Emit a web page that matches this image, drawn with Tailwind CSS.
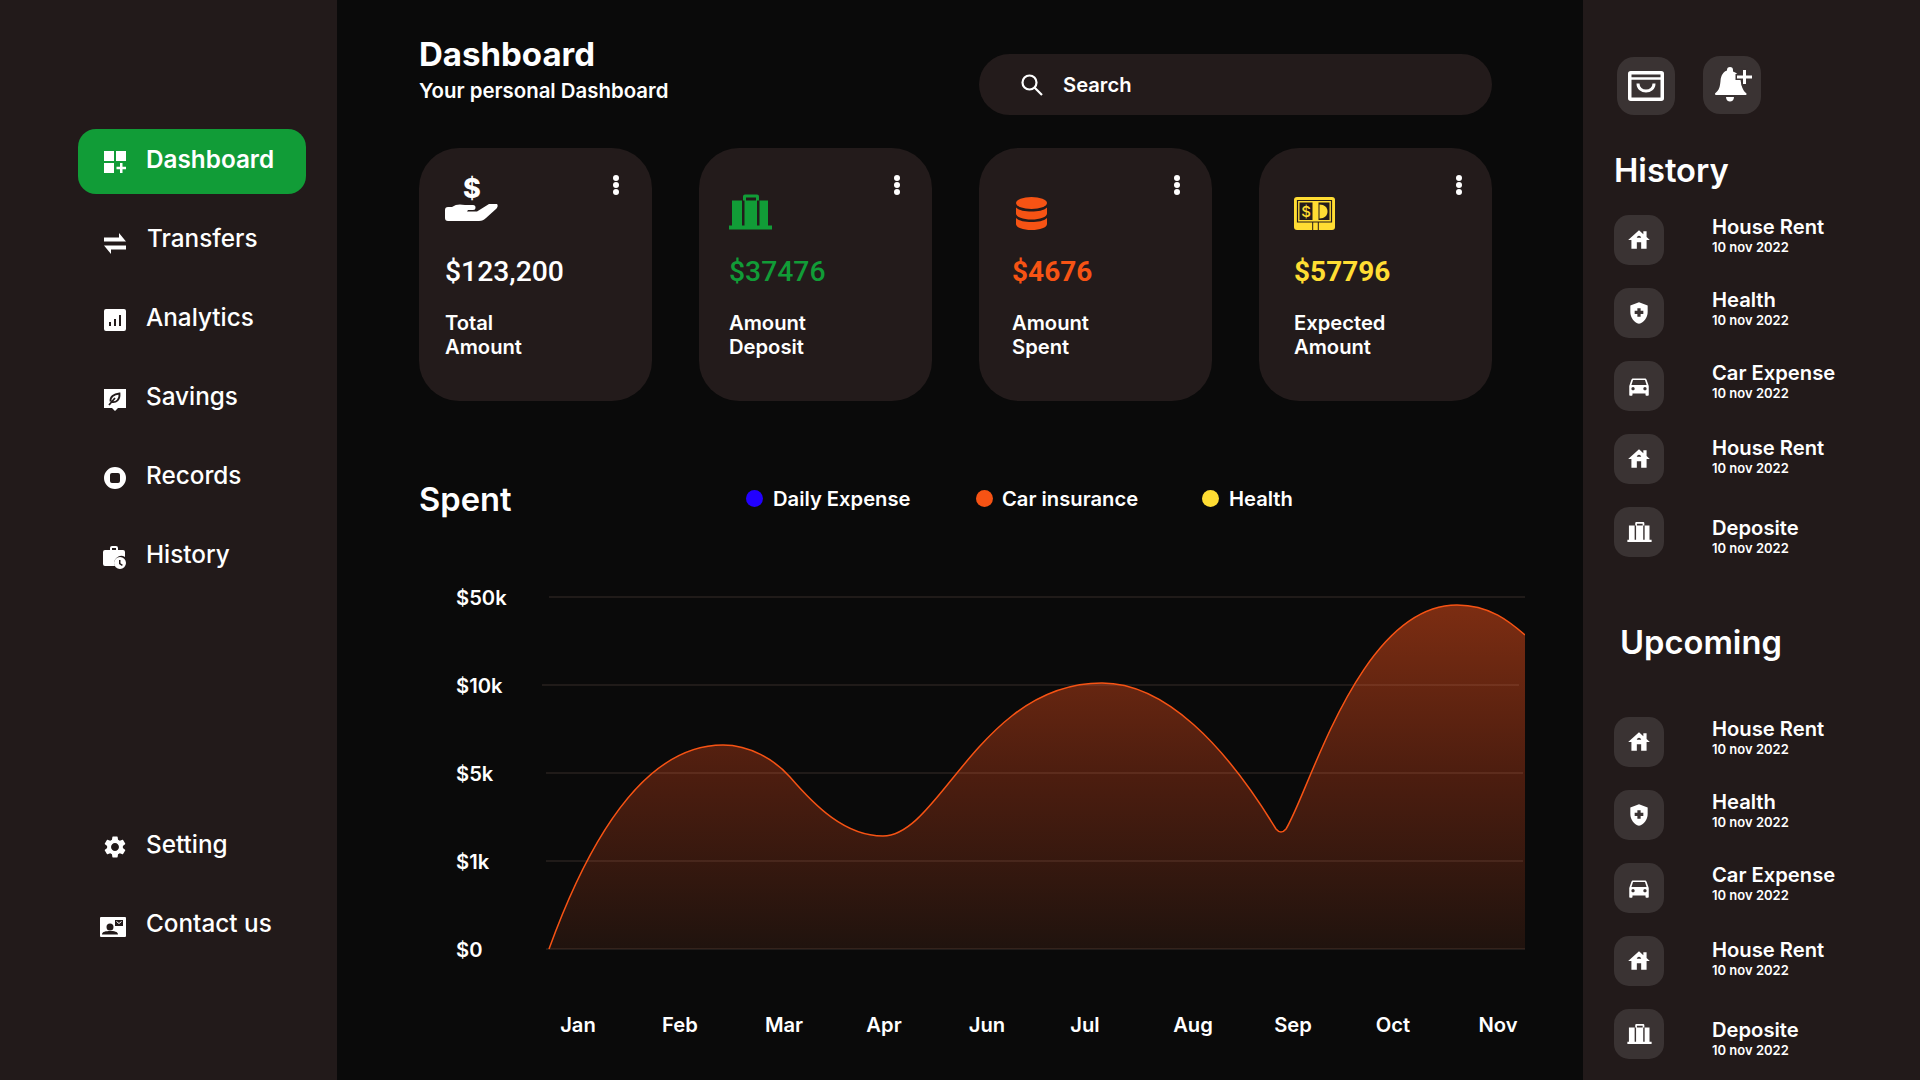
<!DOCTYPE html>
<html lang="en">
  <head>
    <meta charset="UTF-8" />
    <meta name="viewport" content="width=device-width, initial-scale=1.0" />
    <title>Dashboard</title>
    <script src="https://cdn.jsdelivr.net/npm/@tailwindcss/browser@4"></script>
  </head>
  <body class="bg-[#0a0a0a] text-white font-['Inter',sans-serif] h-[1080px] overflow-hidden">
    <!-- shared list icons -->
    <svg class="hidden">
      <symbol id="i-house" viewBox="0 0 24 24"><path fill="#fff" d="M19 9.300V4h-3v2.600L12 3 2 12h3v8h5v-6h4v6h5v-8h3l-3-2.700zm-9 .7c0-1.100.9-2 2-2s2 .9 2 2h-4z"/></symbol>
      <symbol id="i-shield" viewBox="0 0 24 24"><path fill="#fff" d="M10.500 13H8v-3h2.500V7.500h3V10H16v3h-2.500v2.500h-3V13zM12 2L4 5v6.090c0 5.050 3.410 9.760 8 10.910 4.590-1.150 8-5.860 8-10.910V5l-8-3z"/></symbol>
      <symbol id="i-car" viewBox="0 0 24 24"><path fill="#fff" d="M18.920 6.010C18.720 5.420 18.160 5 17.500 5h-11c-.66 0-1.210.42-1.420 1.010L3 12v8c0 .55.45 1 1 1h1c.55 0 1-.45 1-1v-1h12v1c0 .55.45 1 1 1h1c.55 0 1-.45 1-1v-8l-2.080-5.990zM6.500 16c-.83 0-1.500-.67-1.500-1.500S5.670 13 6.500 13s1.500.67 1.500 1.500S7.330 16 6.500 16zm11 0c-.83 0-1.500-.67-1.500-1.500s.67-1.500 1.500-1.500 1.500.67 1.500 1.500-.67 1.500-1.500 1.500zM5 11l1.500-4.500h11L19 11H5z"/></symbol>
      <symbol id="i-bank" viewBox="0 0 43 35"><path fill="#fff" fill-rule="evenodd" d="M14 6V2a2 2 0 0 1 2-2h12a2 2 0 0 1 2 2v4h9v25h4v4H0v-4h3V6zM17 3v3h10V3zM13 6v25h2.500V6zM28 6v25h2.500V6z"/></symbol>
    </svg>

    <div class="flex h-[1080px]">
      <!-- sidebar -->
      <aside class="w-[337px] shrink-0 bg-[#221a1a] pt-[129px] pl-[78px] flex flex-col">
        <nav class="flex flex-col gap-[14px] text-[24.300px] font-medium">
          <a class="w-[228px] h-[65px] bg-[#119c37] rounded-[18px] pl-[26px] flex items-center gap-[20px] font-semibold">
            <svg class="w-[22px] h-[22px]" viewBox="0 0 22 22" fill="#fff"><path d="M0 0h10v10H0zM12 0h10v10H12zM0 12h10v10H0zM16 12h2.500v3.800H22v2.400h-3.500V22H16v-3.800h-3.500v-2.400H16z"/></svg>
            <span class="-mt-[4px]">Dashboard</span>
          </a>
          <a class="w-[228px] h-[65px] pl-[26px] flex items-center gap-[21px]">
            <svg class="w-[22px] h-[22px] mt-[6px]" viewBox="0 0 22 22" fill="#fff"><path d="M0 4.500h15V0l7 8.500H0zM22 16.500H7V21L0 12.500h22z"/></svg>
            <span class="-mt-[4px]">Transfers</span>
          </a>
          <a class="w-[228px] h-[65px] pl-[26px] flex items-center gap-[20px]">
            <svg class="w-[22px] h-[22px]" viewBox="0 0 22 22"><path fill="#fff" fill-rule="evenodd" d="M2 0h18a2 2 0 0 1 2 2v18a2 2 0 0 1-2 2H2a2 2 0 0 1-2-2V2a2 2 0 0 1 2-2zM5 13v4h2v-4zM10 10v7h2v-7zM15 6v11h2V6z"/></svg>
            <span class="-mt-[4px]">Analytics</span>
          </a>
          <a class="w-[228px] h-[65px] pl-[26px] flex items-center gap-[20px]">
            <svg class="w-[22px] h-[22px] mt-[2px]" viewBox="0 0 22 22"><path fill="#fff" d="M0 0h22v19h-8l-3 3-3-3H0z"/><path fill="none" stroke="#221a1a" stroke-width="1.800" d="M6.500 12.500c-.5-4.500 3-7.500 9-8 .5 6-3 9.500-8 8.500M5 16l6-7"/></svg>
            <span class="-mt-[4px]">Savings</span>
          </a>
          <a class="w-[228px] h-[65px] pl-[26px] flex items-center gap-[20px]">
            <svg class="w-[22px] h-[22px]" viewBox="0 0 22 22"><path fill="#fff" fill-rule="evenodd" d="M11 0a11 11 0 1 1 0 22a11 11 0 0 1 0-22zM8 6a2 2 0 0 0-2 2v6a2 2 0 0 0 2 2h6a2 2 0 0 0 2-2V8a2 2 0 0 0-2-2z"/></svg>
            <span class="-mt-[4px]">Records</span>
          </a>
          <a class="w-[228px] h-[65px] pl-[25px] flex items-center gap-[20px]">
            <svg class="w-[23px] h-[23px] mt-[1px]" viewBox="0 0 23 23"><path fill="#fff" fill-rule="evenodd" d="M7 4V2a2 2 0 0 1 2-2h4a2 2 0 0 1 2 2v2h5a2 2 0 0 1 2 2v5a7 7 0 0 0-10 9H2a2 2 0 0 1-2-2V6a2 2 0 0 1 2-2zM9 2v2h4V2z"/><path fill="#fff" fill-rule="evenodd" d="M17 11a6 6 0 1 1 0 12a6 6 0 0 1 0-12zM16 14v4l3 2 .8-1.200-2.300-1.500V14z"/></svg>
            <span class="-mt-[4px]">History</span>
          </a>
        </nav>
        <nav class="mt-[225px] flex flex-col gap-[14px] text-[24.300px] font-medium">
          <a class="w-[228px] h-[65px] pl-[26px] flex items-center gap-[20px]">
            <svg class="w-[22px] h-[22px]" viewBox="2.400 2 19.200 20"><path fill="#fff" d="M19.140 12.940c.04-.3.06-.61.06-.94 0-.32-.02-.64-.07-.94l2.030-1.580c.18-.14.23-.41.12-.61l-1.920-3.320c-.12-.22-.37-.29-.59-.22l-2.390.96c-.5-.38-1.030-.7-1.620-.94l-.36-2.540c-.04-.24-.24-.41-.48-.41h-3.840c-.24 0-.43.17-.47.41l-.36 2.540c-.59.24-1.130.57-1.620.94l-2.390-.96c-.22-.08-.47 0-.59.22L2.740 8.870c-.12.21-.08.47.12.61l2.030 1.580c-.05.3-.09.63-.09.94s.02.64.07.94l-2.030 1.580c-.18.14-.23.41-.12.61l1.920 3.320c.12.22.37.29.59.22l2.390-.96c.5.38 1.030.7 1.620.94l.36 2.540c.05.24.24.41.48.41h3.840c.24 0 .44-.17.47-.41l.36-2.540c.59-.24 1.130-.56 1.620-.94l2.390.96c.22.08.47 0 .59-.22l1.920-3.320c.12-.22.07-.47-.12-.61l-2.010-1.580zM12 15.600c-1.980 0-3.600-1.620-3.600-3.600s1.620-3.600 3.600-3.600 3.600 1.620 3.600 3.600-1.620 3.600-3.600 3.600z"/></svg>
            <span class="-mt-[4px]">Setting</span>
          </a>
          <a class="w-[228px] h-[65px] pl-[22px] flex items-center gap-[20px]">
            <svg class="w-[26px] h-[20px] mt-[3px]" viewBox="0 0 26 20"><path fill="#fff" fill-rule="evenodd" d="M1 0h24a1 1 0 0 1 1 1v18a1 1 0 0 1-1 1H1a1 1 0 0 1-1-1V1a1 1 0 0 1 1-1zM15 3v6h8V3zM10 6.500a3.500 3.500 0 1 0 0 7a3.500 3.500 0 0 0 0-7zM2 17.500h16c0-3-4-3.500-8-3.500s-8 .5-8 3.500z"/><path fill="none" stroke="#fff" stroke-width="1" d="M16.500 4.500l2.500 2 2.500-2"/></svg>
            <span class="-mt-[4px]">Contact us</span>
          </a>
        </nav>
      </aside>

      <!-- main -->
      <main class="flex-1 pl-[82px]">
        <header class="w-[1073px] h-[148px] flex justify-between">
          <div class="pt-[35px]">
            <h1 class="text-[33px] leading-[38px] font-bold">Dashboard</h1>
            <p class="text-[20.400px] leading-[24px] font-semibold mt-[6px]">Your personal Dashboard</p>
          </div>
          <div class="w-[513px] h-[61px] mt-[54px] bg-[#231b1b] rounded-full pl-[42px] flex items-center gap-[20px]">
            <svg class="w-[22px] h-[22px]" viewBox="0 0 22 22" fill="none" stroke="#fff" stroke-width="2.200"><circle cx="8.500" cy="8.500" r="7"/><path d="M13.500 13.500L21 21"/></svg>
            <span class="text-[20.200px] font-semibold mt-[2px]">Search</span>
          </div>
        </header>

        <section class="flex gap-[47px]">
          <div class="relative w-[233px] h-[253px] bg-[#231b1b] rounded-[40px] pl-[26px]">
            <div class="h-[82px] pt-[26px] w-[54px] flex flex-col items-center">
              <span class="text-[27px] leading-[30px] font-extrabold">$</span>
              <svg class="w-[54px] h-[17px] shrink-0" viewBox="0 31 54 17"><path fill="#fff" d="M0 37a3 3 0 0 1 3-3h4c4-3 8-3 13-2h8a2.500 2.500 0 0 1 0 5h-5l-1 1.500h10l12-7.500c3-2 7-1 8 0s1 3-1 5L41 45c-2 2-4 3-7 3H3a3 3 0 0 1-3-3z"/></svg>
            </div>
            <div class="mt-[25px] h-[34px] leading-[34px] text-[28.300px] font-['Roboto',sans-serif] font-medium">$123,200</div>
            <div class="mt-[22px] text-[20.200px] leading-[24px] font-semibold">Total<br />Amount</div>
            <svg class="absolute right-[32px] top-[27px] w-[8px] h-[20px]" viewBox="0 0 8 20" fill="#fff"><circle cx="4" cy="3" r="3"/><circle cx="4" cy="10" r="3"/><circle cx="4" cy="17" r="3"/></svg>
          </div>
          <div class="relative w-[233px] h-[253px] bg-[#231b1b] rounded-[40px] pl-[30px]">
            <div class="h-[82px] pt-[46px]">
              <svg class="w-[43px] h-[36px]" viewBox="0 0 43 35"><path fill="#119c37" fill-rule="evenodd" d="M14 6V2a2 2 0 0 1 2-2h12a2 2 0 0 1 2 2v4h9v25h4v4H0v-4h3V6zM17 3v3h10V3zM13 6v25h2.500V6zM28 6v25h2.500V6z"/></svg>
            </div>
            <div class="mt-[25px] h-[34px] leading-[34px] text-[28.300px] font-['Roboto',sans-serif] font-medium text-[#119c37]">$37476</div>
            <div class="mt-[22px] text-[20.200px] leading-[24px] font-semibold">Amount<br />Deposit</div>
            <svg class="absolute right-[31px] top-[27px] w-[8px] h-[20px]" viewBox="0 0 8 20" fill="#fff"><circle cx="4" cy="3" r="3"/><circle cx="4" cy="10" r="3"/><circle cx="4" cy="17" r="3"/></svg>
          </div>
          <div class="relative w-[233px] h-[253px] bg-[#231b1b] rounded-[40px] pl-[33px]">
            <div class="h-[82px] pt-[49px] pl-[4px]">
              <svg class="w-[31px] h-[33px]" viewBox="0 0 31 33" fill="#f65314"><ellipse cx="15.500" cy="6" rx="15.500" ry="6"/><path d="M0 10.500c3 3 9 4 15.500 4s12.500-1 15.500-4v6c0 3.500-7 6-15.500 6S0 20 0 16.500zM0 21c3 3 9 4 15.500 4S28 24 31 21v6c0 3.500-7 6-15.500 6S0 30.500 0 27z"/></svg>
            </div>
            <div class="mt-[25px] h-[34px] leading-[34px] text-[28px] font-['Roboto',sans-serif] font-bold text-[#f65314]">$4676</div>
            <div class="mt-[22px] text-[20.200px] leading-[24px] font-semibold">Amount<br />Spent</div>
            <svg class="absolute right-[31px] top-[27px] w-[8px] h-[20px]" viewBox="0 0 8 20" fill="#fff"><circle cx="4" cy="3" r="3"/><circle cx="4" cy="10" r="3"/><circle cx="4" cy="17" r="3"/></svg>
          </div>
          <div class="relative w-[233px] h-[253px] bg-[#231b1b] rounded-[40px] pl-[35px]">
            <div class="h-[82px] pt-[49px]">
              <svg class="w-[41px] h-[33px]" viewBox="0 0 41 33"><rect width="41" height="33" rx="3" fill="#ffdd33"/><path d="M3.500 3.500h34v21.500h-34z" fill="none" stroke="#231b1b" stroke-width="1.200"/><path d="M5.500 5.500h13v17.500h-13zM24.500 5.500h11v17.500h-11z" fill="#231b1b"/><path d="M18.700 25v8M24.300 25v8" stroke="#231b1b" stroke-width="1"/><path d="M25.500 7.500c5 0 8 3 8 7s-3 7-8 7z" fill="#ffdd33"/><text x="12" y="19.500" text-anchor="middle" font-size="15" font-weight="500" fill="#ffdd33" font-family="Inter, sans-serif">$</text></svg>
            </div>
            <div class="mt-[25px] h-[34px] leading-[34px] text-[28px] font-['Roboto',sans-serif] font-bold text-[#ffdd33]">$57796</div>
            <div class="mt-[22px] text-[20.200px] leading-[24px] font-semibold">Expected<br />Amount</div>
            <svg class="absolute right-[29px] top-[27px] w-[8px] h-[20px]" viewBox="0 0 8 20" fill="#fff"><circle cx="4" cy="3" r="3"/><circle cx="4" cy="10" r="3"/><circle cx="4" cy="17" r="3"/></svg>
          </div>
        </section>

        <section class="mt-[78px] flex items-center h-[40px]">
          <h2 class="w-[327px] text-[32.700px] leading-[40px] font-semibold">Spent</h2>
          <div class="flex items-center text-[20.200px] font-semibold">
            <span class="w-[17px] h-[17px] rounded-full bg-[#2200ff] mr-[10px]"></span><span class="w-[203px]">Daily Expense</span>
            <span class="w-[17px] h-[17px] rounded-full bg-[#f65314] mr-[9px]"></span><span class="w-[200px]">Car insurance</span>
            <span class="w-[17px] h-[17px] rounded-full bg-[#ffdd33] mr-[10px]"></span><span>Health</span>
          </div>
        </section>

        <section class="mt-[71px] h-[362px] flex">
          <div class="w-[121px] shrink-0 pl-[37px] -mt-[36px] flex flex-col text-[20.200px] font-semibold">
            <span class="h-[88px] shrink-0 flex items-center">$50k</span>
            <span class="h-[88px] shrink-0 flex items-center">$10k</span>
            <span class="h-[88px] shrink-0 flex items-center">$5k</span>
            <span class="h-[88px] shrink-0 flex items-center">$1k</span>
            <span class="h-[88px] shrink-0 flex items-center">$0</span>
          </div>
          <svg class="w-[985px] h-[362px] shrink-0" viewBox="540 590 985 362">
            <defs>
              <linearGradient id="spentFill" gradientUnits="userSpaceOnUse" x1="0" y1="605" x2="0" y2="949">
                <stop offset="0" stop-color="#7c2d12"/>
                <stop offset="0.5" stop-color="#4c1d0f"/>
                <stop offset="1" stop-color="#20130e"/>
              </linearGradient>
            </defs>
            <path fill="url(#spentFill)" d="M549 949C585 850 640 745 723 745C750 745 775 760 790 777C815 806 845 836 883 836C940 836 980 683 1102 683C1165 683 1225 745 1276 829Q1281 835 1286 829C1310 790 1360 605 1457 605C1490 605 1510 622 1525 635V949Z"/>
            <g stroke="#ffc8b4" stroke-opacity="0.12" stroke-width="1.500">
              <path d="M549 597H1525"/>
              <path d="M542 685H1519"/>
              <path d="M546 773H1523"/>
              <path d="M546 861H1523"/>
              <path d="M546 949H1525"/>
            </g>
            <path fill="none" stroke="#f65314" stroke-width="1.500" d="M549 949C585 850 640 745 723 745C750 745 775 760 790 777C815 806 845 836 883 836C940 836 980 683 1102 683C1165 683 1225 745 1276 829Q1281 835 1286 829C1310 790 1360 605 1457 605C1490 605 1510 622 1525 635"/>
          </svg>
        </section>

        <section class="ml-[108px] mt-[61px] grid grid-cols-[102px_102px_106px_94px_112px_84px_132px_68px_132px_78px] text-center text-[20.200px] leading-[24px] font-semibold">
          <span>Jan</span><span>Feb</span><span>Mar</span><span>Apr</span><span>Jun</span><span>Jul</span><span>Aug</span><span>Sep</span><span>Oct</span><span>Nov</span>
        </section>
      </main>

      <!-- right panel -->
      <aside class="w-[337px] shrink-0 bg-[#221a1a] pt-[56px] pl-[31px]">
        <div class="flex gap-[28px] pl-[3px]">
          <div class="w-[58px] h-[58px] mt-[1px] rounded-[17px] bg-[#3a3333] flex items-center justify-center">
            <svg class="w-[36px] h-[30px]" viewBox="0 0 36 30" fill="none" stroke="#fff" stroke-width="3.500"><rect x="1.750" y="1.750" width="32.500" height="26.500" rx="1"/><path d="M1.500 7.500h33" stroke-width="2.500"/><path d="M10 12.500c0 10 16 10 16 0" stroke-width="3"/></svg>
          </div>
          <div class="w-[58px] h-[58px] rounded-[17px] bg-[#3a3333] flex items-center justify-center">
            <svg class="w-[38px] h-[36px] ml-[3px]" viewBox="0 0 38 36" fill="#fff"><path d="M15 0a3 3 0 0 1 3 3v1.500c4 1.200 6.500 4 7.500 8.500 .8 4 1.500 10 5.500 13 1 .8 .5 2-.5 2H1c-1 0-1.500-1.200-.5-2 4-3 4.500-7 5-12 .5-6 3-9.500 6.500-10.500V3a3 3 0 0 1 3-3zM11 30h8c0 6-8 6-8 0z"/><path d="M28 3h3v5.500h6v3h-6V17h-3v-5.500h-6v-3h6z" stroke="#3a3333" stroke-width="3" paint-order="stroke"/></svg>
          </div>
        </div>

        <h2 class="mt-[35px] h-[40px] text-[32.700px] leading-[40px] font-semibold">History</h2>
        <ul class="mt-[25px] flex flex-col">
          <li class="h-[73px] flex items-start"><span class="w-[50px] h-[50px] rounded-[15px] bg-[#3a3333] flex items-center justify-center"><svg class="w-[26px] h-[26px]"><use href="#i-house"/></svg></span><div class="ml-[48px]"><p class="text-[20.200px] leading-[24px] font-semibold">House Rent</p><p class="text-[13px] leading-[16px] font-semibold">10 nov 2022</p></div></li>
          <li class="h-[73px] flex items-start"><span class="w-[50px] h-[50px] rounded-[15px] bg-[#3a3333] flex items-center justify-center"><svg class="w-[26px] h-[26px]"><use href="#i-shield"/></svg></span><div class="ml-[48px]"><p class="text-[20.200px] leading-[24px] font-semibold">Health</p><p class="text-[13px] leading-[16px] font-semibold">10 nov 2022</p></div></li>
          <li class="h-[73px] flex items-start"><span class="w-[50px] h-[50px] rounded-[15px] bg-[#3a3333] flex items-center justify-center"><svg class="w-[26px] h-[26px]"><use href="#i-car"/></svg></span><div class="ml-[48px]"><p class="text-[20.200px] leading-[24px] font-semibold">Car Expense</p><p class="text-[13px] leading-[16px] font-semibold">10 nov 2022</p></div></li>
          <li class="h-[73px] flex items-start"><span class="w-[50px] h-[50px] rounded-[15px] bg-[#3a3333] flex items-center justify-center"><svg class="w-[26px] h-[26px]"><use href="#i-house"/></svg></span><div class="ml-[48px] pt-[2px]"><p class="text-[20.200px] leading-[24px] font-semibold">House Rent</p><p class="text-[13px] leading-[16px] font-semibold">10 nov 2022</p></div></li>
          <li class="h-[73px] flex items-start"><span class="w-[50px] h-[50px] rounded-[15px] bg-[#3a3333] flex items-center justify-center"><svg class="w-[25px] h-[20px]" viewBox="0 0 43 35"><use href="#i-bank"/></svg></span><div class="ml-[48px] pt-[9px]"><p class="text-[20.200px] leading-[24px] font-semibold">Deposite</p><p class="text-[13px] leading-[16px] font-semibold">10 nov 2022</p></div></li>
        </ul>

        <h2 class="mt-[42px] pl-[6px] h-[40px] text-[32.700px] leading-[40px] font-semibold">Upcoming</h2>
        <ul class="mt-[55px] flex flex-col">
          <li class="h-[73px] flex items-start"><span class="w-[50px] h-[50px] rounded-[15px] bg-[#3a3333] flex items-center justify-center"><svg class="w-[26px] h-[26px]"><use href="#i-house"/></svg></span><div class="ml-[48px]"><p class="text-[20.200px] leading-[24px] font-semibold">House Rent</p><p class="text-[13px] leading-[16px] font-semibold">10 nov 2022</p></div></li>
          <li class="h-[73px] flex items-start"><span class="w-[50px] h-[50px] rounded-[15px] bg-[#3a3333] flex items-center justify-center"><svg class="w-[26px] h-[26px]"><use href="#i-shield"/></svg></span><div class="ml-[48px]"><p class="text-[20.200px] leading-[24px] font-semibold">Health</p><p class="text-[13px] leading-[16px] font-semibold">10 nov 2022</p></div></li>
          <li class="h-[73px] flex items-start"><span class="w-[50px] h-[50px] rounded-[15px] bg-[#3a3333] flex items-center justify-center"><svg class="w-[26px] h-[26px]"><use href="#i-car"/></svg></span><div class="ml-[48px]"><p class="text-[20.200px] leading-[24px] font-semibold">Car Expense</p><p class="text-[13px] leading-[16px] font-semibold">10 nov 2022</p></div></li>
          <li class="h-[73px] flex items-start"><span class="w-[50px] h-[50px] rounded-[15px] bg-[#3a3333] flex items-center justify-center"><svg class="w-[26px] h-[26px]"><use href="#i-house"/></svg></span><div class="ml-[48px] pt-[2px]"><p class="text-[20.200px] leading-[24px] font-semibold">House Rent</p><p class="text-[13px] leading-[16px] font-semibold">10 nov 2022</p></div></li>
          <li class="h-[73px] flex items-start"><span class="w-[50px] h-[50px] rounded-[15px] bg-[#3a3333] flex items-center justify-center"><svg class="w-[25px] h-[20px]" viewBox="0 0 43 35"><use href="#i-bank"/></svg></span><div class="ml-[48px] pt-[9px]"><p class="text-[20.200px] leading-[24px] font-semibold">Deposite</p><p class="text-[13px] leading-[16px] font-semibold">10 nov 2022</p></div></li>
        </ul>
      </aside>
    </div>
  </body>
</html>
